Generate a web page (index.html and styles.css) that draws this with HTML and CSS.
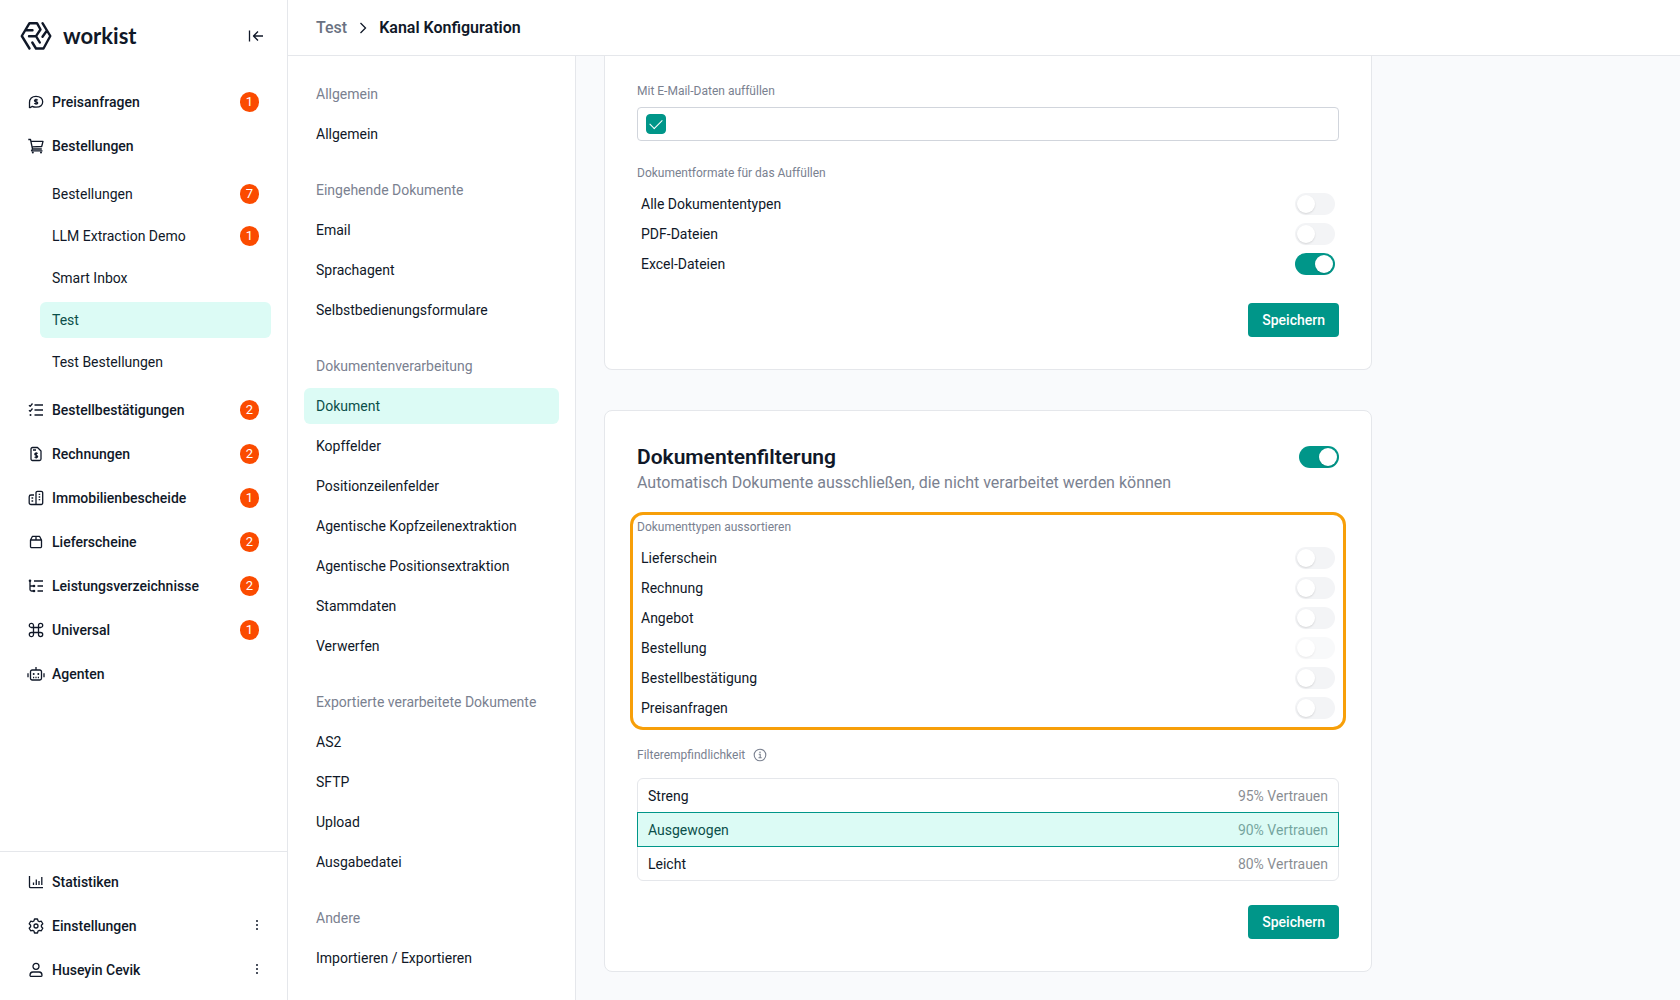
FILE: index.html
```html
<!DOCTYPE html>
<html lang="de">
<head>
    <meta charset="UTF-8">
    <meta name="viewport" content="width=device-width, initial-scale=1.0">
    <title>Kanal Konfiguration</title>
    <link rel="stylesheet" href="styles.css">
</head>
<body>
    <aside class="sidebar">
        <div class="brand">
            <a href="#" class="brand-link">
                <svg class="brand-logo" viewBox="0 0 32 30" aria-hidden="true">
                    <path d="M9.500 27.500 1.800 15 9.500 2.200H17L20.500 8.500 16 15.200 19.800 21.500M6.500 9.300H12.500M9 15.200H16M12.300 21.500 16 27.500H23.500L30.300 15 22.500 2.200M27 9.500 22.500 15.800"/>
                </svg>
                <span class="brand-name">workist</span>
            </a>
            <button type="button" class="icon-button" aria-label="Menü einklappen">
                <svg class="icon" viewBox="0 0 16 16"><path d="M2.500 2.500v11M16 8H6.500M11 3.500 6.500 8l4.500 4.500"/></svg>
            </button>
        </div>

        <nav class="side-nav">
            <a href="#" class="nav-item">
                <svg class="icon" viewBox="0 0 16 16"><path d="M1.500 14V8.500C1.500 4.500 4 2.300 8 2.300s6.700 2.200 6.700 5.500S12 13.200 8 13.200c-1.500 0-2.700-.2-3.700-.8L1.500 14M9.700 6.300C9 5.500 6.500 5.400 6.500 6.800c0 1.500 3.200.6 3.200 2.100 0 1.400-2.600 1.200-3.400.4M8 4.800v6"/></svg>
                <span class="nav-text">Preisanfragen</span>
                <span class="badge">1</span>
            </a>
            <a href="#" class="nav-item">
                <svg class="icon" viewBox="0 0 16 16"><path d="M.3 1.500h2.200l2 9.500h9.300M3 3.300h12L13.700 8.500l-9.500.3M4.500 11l-1 1.800h11"/><circle class="dot" cx="4.800" cy="14.500" r="1"/><circle class="dot" cx="13" cy="14.500" r="1"/></svg>
                <span class="nav-text">Bestellungen</span>
            </a>
            <div class="sub-nav">
                <a href="#" class="sub-item"><span class="nav-text">Bestellungen</span><span class="badge">7</span></a>
                <a href="#" class="sub-item"><span class="nav-text">LLM Extraction Demo</span><span class="badge">1</span></a>
                <a href="#" class="sub-item"><span class="nav-text">Smart Inbox</span></a>
                <a href="#" class="sub-item active"><span class="nav-text">Test</span></a>
                <a href="#" class="sub-item"><span class="nav-text">Test Bestellungen</span></a>
            </div>
            <a href="#" class="nav-item">
                <svg class="icon" viewBox="0 0 16 16"><path d="M6.500 3H15M6.500 8H15M6.500 13H15M1 3.200l1.200 1.200L4.500 1.500M1 8.200l1.200 1.200L4.500 6.500"/><circle class="dot" cx="2.500" cy="13" r="1"/></svg>
                <span class="nav-text">Bestellbestätigungen</span>
                <span class="badge">2</span>
            </a>
            <a href="#" class="nav-item">
                <svg class="icon" viewBox="0 0 16 16"><path d="M4.500 1.500h5L13 5v8a1.500 1.500 0 0 1-1.500 1.500h-7A1.500 1.500 0 0 1 3 13V3a1.500 1.500 0 0 1 1.500-1.500zM5 4h3M9.700 7.500C9 7 6.800 7 6.800 8.300s2.800.8 2.800 2.100-2.300 1.300-3 .5M8.200 6.300v6.200"/></svg>
                <span class="nav-text">Rechnungen</span>
                <span class="badge">2</span>
            </a>
            <a href="#" class="nav-item">
                <svg class="icon" viewBox="0 0 16 16"><path d="M8.500 14.500H3A1.800 1.800 0 0 1 1.200 12.700V6.800A1.800 1.800 0 0 1 3 5h3M8 14.500V2.800A1.500 1.500 0 0 1 9.500 1.300h3.700a1.500 1.500 0 0 1 1.500 1.500v10.200a1.500 1.500 0 0 1-1.500 1.500H8M3.500 8h1.700M3.500 11h1.700M10.700 4.300h1.500M10.700 7h1.500M10.700 9.700h1.500"/></svg>
                <span class="nav-text">Immobilienbescheide</span>
                <span class="badge">1</span>
            </a>
            <a href="#" class="nav-item">
                <svg class="icon" viewBox="0 0 16 16"><path d="M2.500 6 4.500 2.300h7L13.500 6v6.500a1.200 1.200 0 0 1-1.200 1.200H3.700A1.200 1.200 0 0 1 2.500 12.500zM2.500 6h11M8 2.300V6"/></svg>
                <span class="nav-text">Lieferscheine</span>
                <span class="badge">2</span>
            </a>
            <a href="#" class="nav-item">
                <svg class="icon" viewBox="0 0 16 16"><path d="M6 3H15M9.500 8H15M9.500 13H15M2 2v9.500A1.500 1.500 0 0 0 3.500 13H6M2 8h4"/><circle class="dot" cx="2" cy="2.800" r="1.300"/><circle class="dot" cx="6" cy="8" r="1.300"/><circle class="dot" cx="6" cy="13" r="1.300"/></svg>
                <span class="nav-text">Leistungsverzeichnisse</span>
                <span class="badge">2</span>
            </a>
            <a href="#" class="nav-item">
                <svg class="icon" viewBox="0 0 16 16"><path d="M5.500 5.500h5v5h-5zM5.500 5.500H3.400a2.100 2.100 0 1 1 2.100-2.100zM10.500 5.500V3.400a2.100 2.100 0 1 1 2.100 2.100zM10.500 10.500h2.100a2.100 2.100 0 1 1-2.100 2.100zM5.500 10.500v2.100a2.100 2.100 0 1 1-2.100-2.100z"/></svg>
                <span class="nav-text">Universal</span>
                <span class="badge">1</span>
            </a>
            <a href="#" class="nav-item">
                <svg class="icon icon-wide" viewBox="0 0 18 16"><path d="M9 1V4M5.200 4h7.600A1.700 1.700 0 0 1 14.500 5.700v6.600a1.700 1.700 0 0 1-1.700 1.700h-7.600a1.700 1.700 0 0 1-1.700-1.700V5.700A1.700 1.700 0 0 1 5.200 4zM1 7.300v4M17 7.300v4M6 11.500h1.200M8.400 11.500h1.200M10.800 11.500H12"/><circle class="dot" cx="6.700" cy="8" r="1"/><circle class="dot" cx="11.300" cy="8" r="1"/></svg>
                <span class="nav-text">Agenten</span>
            </a>
        </nav>

        <nav class="side-footer">
            <a href="#" class="nav-item">
                <svg class="icon" viewBox="0 0 16 16"><path d="M1.500 2v10.500a1.200 1.200 0 0 0 1.200 1.200H15M5.500 11V8.500M8.300 11V5.500M11 11V7M13.800 11V3"/></svg>
                <span class="nav-text">Statistiken</span>
            </a>
            <div class="nav-item">
                <svg class="icon" viewBox="0 0 16 16"><path d="M6.500 1h3l.5 1.900 1.400.8 1.900-.5 1.500 2.600L13.400 7.200v1.600l1.400 1.400-1.500 2.600-1.900-.5-1.400.8-.5 1.900h-3L6 13.100l-1.400-.8-1.900.5-1.500-2.600 1.400-1.400V7.200L1.200 5.800l1.500-2.600 1.900.5L6 2.900z"/><circle cx="8" cy="8" r="2"/></svg>
                <a href="#" class="nav-text">Einstellungen</a>
                <button type="button" class="more-button" aria-label="Mehr zu Einstellungen">
                    <svg class="more" viewBox="0 0 4 14"><circle cx="2" cy="2" r="1"/><circle cx="2" cy="6" r="1"/><circle cx="2" cy="10" r="1"/></svg>
                </button>
            </div>
            <div class="nav-item">
                <svg class="icon" viewBox="0 0 16 16"><circle cx="8" cy="4.300" r="3"/><path d="M4.800 10h6.400c1.700 0 2.800 1.500 2.800 3.200 0 .7-.5 1.200-1.200 1.200H3.200c-.7 0-1.200-.5-1.200-1.200 0-1.700 1.100-3.200 2.800-3.200z"/></svg>
                <a href="#" class="nav-text">Huseyin Cevik</a>
                <button type="button" class="more-button" aria-label="Mehr zu Huseyin Cevik">
                    <svg class="more" viewBox="0 0 4 14"><circle cx="2" cy="2" r="1"/><circle cx="2" cy="6" r="1"/><circle cx="2" cy="10" r="1"/></svg>
                </button>
            </div>
        </nav>
    </aside>

    <div class="page">
        <header class="topbar">
            <a href="#" class="crumb">Test</a>
            <svg class="chevron" viewBox="0 0 8 12" aria-hidden="true"><path d="M1.500 1 6.500 6l-5 5"/></svg>
            <h1 class="page-title">Kanal Konfiguration</h1>
        </header>

        <div class="page-body">
            <nav class="config-nav">
                <section class="config-group">
                    <h2 class="config-heading">Allgemein</h2>
                    <a href="#" class="config-item">Allgemein</a>
                </section>
                <section class="config-group">
                    <h2 class="config-heading">Eingehende Dokumente</h2>
                    <a href="#" class="config-item">Email</a>
                    <a href="#" class="config-item">Sprachagent</a>
                    <a href="#" class="config-item">Selbstbedienungsformulare</a>
                </section>
                <section class="config-group">
                    <h2 class="config-heading">Dokumentenverarbeitung</h2>
                    <a href="#" class="config-item active">Dokument</a>
                    <a href="#" class="config-item">Kopffelder</a>
                    <a href="#" class="config-item">Positionzeilenfelder</a>
                    <a href="#" class="config-item">Agentische Kopfzeilenextraktion</a>
                    <a href="#" class="config-item">Agentische Positionsextraktion</a>
                    <a href="#" class="config-item">Stammdaten</a>
                    <a href="#" class="config-item">Verwerfen</a>
                </section>
                <section class="config-group">
                    <h2 class="config-heading">Exportierte verarbeitete Dokumente</h2>
                    <a href="#" class="config-item">AS2</a>
                    <a href="#" class="config-item">SFTP</a>
                    <a href="#" class="config-item">Upload</a>
                    <a href="#" class="config-item">Ausgabedatei</a>
                </section>
                <section class="config-group">
                    <h2 class="config-heading">Andere</h2>
                    <a href="#" class="config-item">Importieren / Exportieren</a>
                </section>
            </nav>

            <main class="content">
                <form class="card card-continued">
                    <div class="field">
                        <label class="field-label" for="fillEmail">Mit E-Mail-Daten auffüllen</label>
                        <div class="check-box">
                            <input type="checkbox" id="fillEmail" class="check" checked>
                        </div>
                    </div>
                    <div class="field">
                        <div class="field-label">Dokumentformate für das Auffüllen</div>
                        <div class="switch-row">
                            <label for="allTypes">Alle Dokumententypen</label>
                            <input type="checkbox" role="switch" id="allTypes" class="switch">
                        </div>
                        <div class="switch-row">
                            <label for="pdfFiles">PDF-Dateien</label>
                            <input type="checkbox" role="switch" id="pdfFiles" class="switch">
                        </div>
                        <div class="switch-row">
                            <label for="excelFiles">Excel-Dateien</label>
                            <input type="checkbox" role="switch" id="excelFiles" class="switch" checked>
                        </div>
                    </div>
                    <div class="actions">
                        <button type="submit" class="save-button">Speichern</button>
                    </div>
                </form>

                <form class="card">
                    <div class="card-header">
                        <div class="card-title-row">
                            <h2 class="card-title"><label for="filterActive">Dokumentenfilterung</label></h2>
                            <input type="checkbox" role="switch" id="filterActive" class="switch" checked>
                        </div>
                        <p class="card-subtitle">Automatisch Dokumente ausschließen, die nicht verarbeitet werden können</p>
                    </div>

                    <div class="field highlighted">
                        <div class="field-label">Dokumenttypen aussortieren</div>
                        <div class="switch-row">
                            <label for="deliveryNote">Lieferschein</label>
                            <input type="checkbox" role="switch" id="deliveryNote" class="switch">
                        </div>
                        <div class="switch-row">
                            <label for="invoice">Rechnung</label>
                            <input type="checkbox" role="switch" id="invoice" class="switch">
                        </div>
                        <div class="switch-row">
                            <label for="offer">Angebot</label>
                            <input type="checkbox" role="switch" id="offer" class="switch">
                        </div>
                        <div class="switch-row">
                            <label for="order">Bestellung</label>
                            <input type="checkbox" role="switch" id="order" class="switch" disabled>
                        </div>
                        <div class="switch-row">
                            <label for="orderConfirmation">Bestellbestätigung</label>
                            <input type="checkbox" role="switch" id="orderConfirmation" class="switch">
                        </div>
                        <div class="switch-row">
                            <label for="priceRequest">Preisanfragen</label>
                            <input type="checkbox" role="switch" id="priceRequest" class="switch">
                        </div>
                    </div>

                    <div class="field">
                        <div class="field-label label-with-info" id="sensitivityLabel">
                            Filterempfindlichkeit
                            <svg class="info" viewBox="0 0 14 14" aria-hidden="true"><circle cx="7" cy="7" r="5.800"/><path d="M5.700 6.300H7.200V9.700M5.500 9.700h3.200"/><circle class="dot" cx="7" cy="4.300" r=".8"/></svg>
                        </div>
                        <div class="options" role="radiogroup" aria-labelledby="sensitivityLabel">
                            <label class="option">
                                <input type="radio" name="sensitivity" value="95">
                                <span>Streng</span>
                                <span class="option-hint">95% Vertrauen</span>
                            </label>
                            <label class="option">
                                <input type="radio" name="sensitivity" value="90" checked>
                                <span>Ausgewogen</span>
                                <span class="option-hint">90% Vertrauen</span>
                            </label>
                            <label class="option">
                                <input type="radio" name="sensitivity" value="80">
                                <span>Leicht</span>
                                <span class="option-hint">80% Vertrauen</span>
                            </label>
                        </div>
                    </div>
                    <div class="actions">
                        <button type="submit" class="save-button">Speichern</button>
                    </div>
                </form>
            </main>
        </div>
    </div>
</body>
</html>
```
FILE: styles.css
```css
* {
    box-sizing: border-box;
}

body {
    display: flex;
    height: 100vh;
    margin: 0;
    overflow: hidden;
    font-family: Roboto, sans-serif;
    font-size: 14px;
    line-height: 20px;
    color: #101828;
    background-color: #f9fafc;
}

h1,
h2,
p {
    margin: 0;
}

a {
    color: inherit;
    text-decoration: none;
}

button,
input {
    margin: 0;
    font: inherit;
}

button {
    padding: 0;
    border: none;
    background: none;
    color: inherit;
    cursor: pointer;
}

/* Icons */
.icon {
    flex: none;
    width: 16px;
    height: 16px;
    fill: none;
    stroke: currentColor;
    stroke-width: 1.3;
    stroke-linejoin: round;
}

.icon-wide {
    width: 18px;
    margin: 0 -1px;
}

.dot {
    fill: currentColor;
    stroke: none;
}

/* Sidebar */
.sidebar {
    display: flex;
    flex-direction: column;
    flex: none;
    width: 288px;
    background-color: white;
    border-right: 1px solid #e5e7eb;
}

.brand {
    display: flex;
    align-items: center;
    justify-content: space-between;
    height: 72px;
    padding: 0 24px 0 20px;
}

.brand-link {
    display: flex;
    align-items: center;
    gap: 11px;
}

.brand-logo {
    width: 32px;
    height: 30px;
    fill: none;
    stroke: currentColor;
    stroke-width: 2.4;
    stroke-linecap: round;
    stroke-linejoin: round;
}

.brand-name {
    font-family: Lato, sans-serif;
    font-size: 22px;
    font-weight: 700;
    line-height: 28px;
}

.icon-button {
    display: flex;
}

.side-nav,
.side-footer {
    display: flex;
    flex-direction: column;
    gap: 8px;
    padding: 12px 16px;
}

.side-nav {
    flex: 1;
    overflow: hidden;
}

.side-footer {
    border-top: 1px solid #e5e7eb;
}

.nav-item,
.sub-item {
    display: flex;
    flex: none;
    align-items: center;
    gap: 8px;
    height: 36px;
    padding: 0 12px;
    border-radius: 6px;
}

.nav-item {
    font-weight: 500;
}

.nav-text {
    flex: 1;
}

.sub-nav {
    display: flex;
    flex-direction: column;
    gap: 6px;
    padding: 4px 0 4px 24px;
}

.badge {
    width: 19px;
    height: 20px;
    border-radius: 10px;
    background-color: #fb4b00;
    color: white;
    font-size: 13px;
    font-weight: 400;
    text-align: center;
}

.active {
    background-color: #dcfbf5;
    color: #0b4f4a;
}

.more-button {
    display: flex;
}

.more {
    width: 4px;
    height: 14px;
    fill: currentColor;
}

/* Page */
.page {
    display: flex;
    flex: 1;
    flex-direction: column;
    min-width: 0;
}

.topbar {
    display: flex;
    flex: none;
    align-items: center;
    gap: 12px;
    height: 56px;
    padding: 0 28px;
    background-color: white;
    border-bottom: 1px solid #e5e7eb;
    font-size: 16px;
    line-height: 24px;
}

.crumb {
    color: #6a7282;
    font-weight: 500;
}

.chevron {
    width: 8px;
    height: 12px;
    fill: none;
    stroke: currentColor;
    stroke-width: 1.3;
}

.page-title {
    font-size: 16px;
    font-weight: 600;
}

.page-body {
    display: flex;
    flex: 1;
    min-height: 0;
}

/* Channel settings menu */
.config-nav {
    display: flex;
    flex: none;
    flex-direction: column;
    gap: 20px;
    width: 288px;
    padding: 20px 16px;
    background-color: white;
    border-right: 1px solid #e5e7eb;
}

.config-group {
    display: flex;
    flex-direction: column;
    gap: 4px;
}

.config-heading,
.config-item {
    padding: 8px 12px;
    border-radius: 6px;
    font-size: 14px;
    font-weight: 400;
    white-space: nowrap;
}

.config-heading {
    color: #7a8190;
}

/* Cards */
.content {
    flex: 1;
    padding: 0 28px 28px;
    overflow: hidden;
}

.card {
    max-width: 768px;
    margin-bottom: 40px;
    padding: 32px;
    background-color: white;
    border: 1px solid #e5e7eb;
    border-radius: 8px;
}

.card-continued {
    padding-top: 27px;
    border-top: none;
    border-radius: 0 0 8px 8px;
}

.card-title-row {
    display: flex;
    align-items: center;
    justify-content: space-between;
}

.card-title {
    font-size: 21px;
    font-weight: 600;
    line-height: 28px;
}

.card-subtitle {
    color: #7a8190;
    font-size: 16px;
    line-height: 24px;
}

.card-header,
.field {
    margin-bottom: 24px;
}

.field-label {
    display: block;
    margin-bottom: 8px;
    color: #7a8190;
    font-size: 12px;
    line-height: 16px;
}

.label-with-info {
    display: flex;
    align-items: center;
    gap: 8px;
    margin-bottom: 15px;
}

.info {
    width: 14px;
    height: 14px;
    fill: none;
    stroke: currentColor;
    stroke-width: 1.1;
}

.highlighted {
    border-radius: 6px;
    outline: 3px solid #f79f09;
    outline-offset: 4px;
}

.check-box {
    display: flex;
    align-items: center;
    height: 34px;
    padding: 0 8px;
    border: 1px solid #d1d5dc;
    border-radius: 4px;
}

.check {
    display: flex;
    align-items: center;
    justify-content: center;
    width: 20px;
    height: 20px;
    border: 1px solid #d1d5dc;
    border-radius: 4px;
    appearance: none;
}

.check:checked {
    border-color: #009689;
    background-color: #009689;
}

.check:checked::before {
    content: "";
    width: 11px;
    height: 6px;
    margin-bottom: 4px;
    border-bottom: 1px solid white;
    border-left: 1px solid white;
    transform: rotate(-45deg);
}

.switch-row {
    display: flex;
    align-items: center;
    justify-content: space-between;
    height: 30px;
    padding: 0 4px;
}

.switch {
    width: 40px;
    height: 22px;
    padding: 2px;
    border-radius: 11px;
    background-color: #f3f4f6;
    appearance: none;
    cursor: pointer;
}

.switch::before {
    content: "";
    display: block;
    width: 18px;
    height: 18px;
    border-radius: 50%;
    background-color: white;
    box-shadow: 0 1px 2px rgba(0, 0, 0, 0.12);
}

.switch:checked {
    background-color: #009689;
}

.switch:checked::before {
    margin-left: auto;
}

.switch:disabled {
    opacity: 0.5;
    cursor: default;
}

.option {
    display: flex;
    align-items: center;
    justify-content: space-between;
    height: 35px;
    padding: 0 10px;
    border: 1px solid #e5e7eb;
}

.option + .option {
    margin-top: -1px;
}

.option:first-child {
    border-radius: 6px 6px 0 0;
}

.option:last-child {
    border-radius: 0 0 6px 6px;
}

.option input {
    position: absolute;
    opacity: 0;
}

.option:has(input:checked) {
    position: relative;
    border-color: #009689;
    background-color: #dcfbf5;
    color: #0b4f4a;
}

.option-hint {
    opacity: 0.5;
}

.actions {
    display: flex;
    justify-content: flex-end;
}

.save-button {
    height: 34px;
    padding: 0 14px;
    border-radius: 4px;
    background-color: #009689;
    color: white;
    font-weight: 500;
}
```
